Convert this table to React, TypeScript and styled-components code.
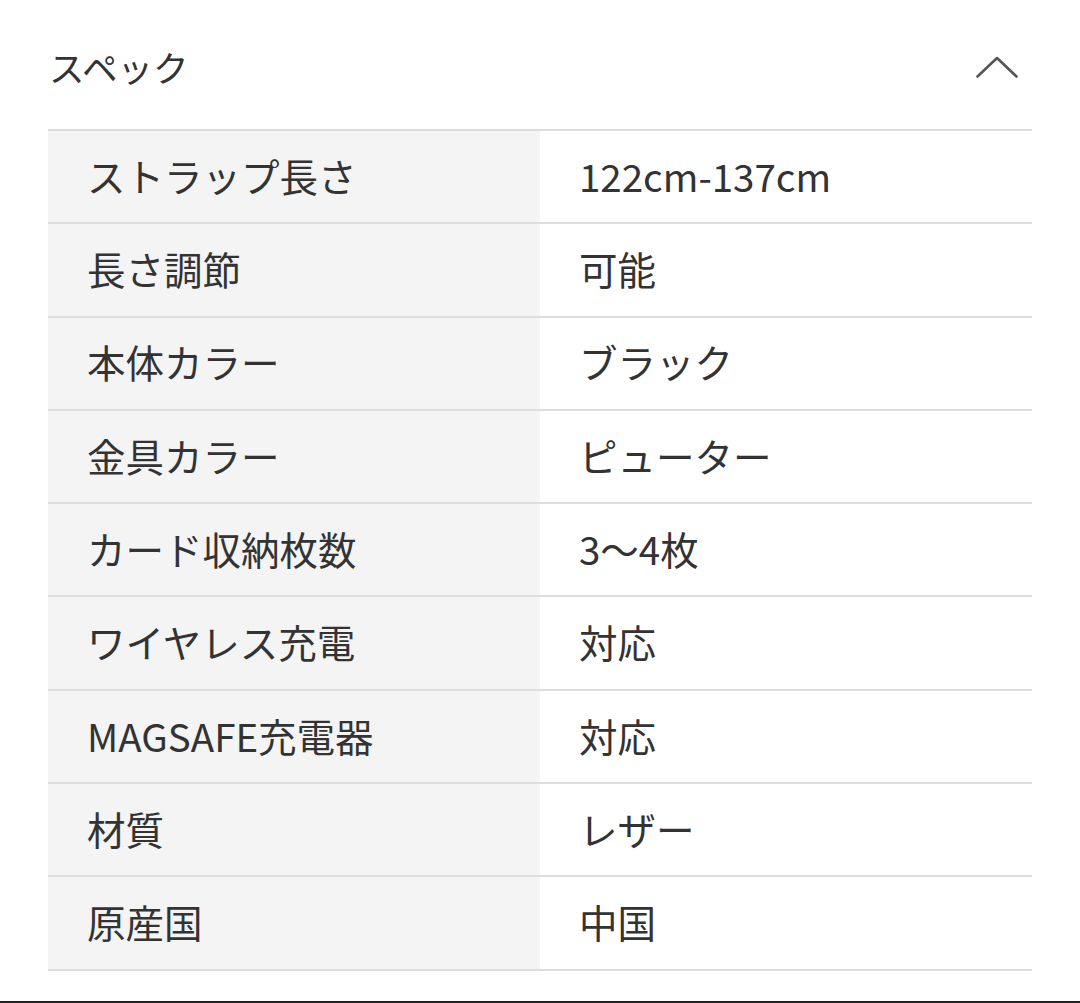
import React from "react";
import styled, { createGlobalStyle } from "styled-components";

const GlobalStyle = createGlobalStyle`
  html, body {
    margin: 0;
    padding: 0;
    background: #ffffff;
  }
  body {
    font-family: "Noto Sans CJK JP", "Noto Sans", sans-serif;
    color: #333333;
  }
`;

const Page = styled.div`
  width: 1080px;
  height: 1003px;
  display: flex;
  flex-direction: column;
  box-sizing: border-box;
  overflow: hidden;
`;

const Section = styled.section`
  padding: 0 48px 0 48px;
  display: flex;
  flex-direction: column;
`;

const Header = styled.div`
  height: 129px;
  padding-top: 4px;
  box-sizing: border-box;
  display: flex;
  align-items: center;
  justify-content: space-between;
`;

const Title = styled.h2`
  margin: 0 0 0 1px;
  font-size: 35.5px;
  font-weight: 400;
  color: #333333;
  letter-spacing: 0;
`;

const Toggle = styled.button`
  border: none;
  background: transparent;
  padding: 0;
  margin-right: 14px;
  width: 42px;
  height: 22px;
  display: flex;
  align-items: center;
  justify-content: center;
  color: #555555;
  cursor: pointer;
`;

const Table = styled.div`
  display: flex;
  flex-direction: column;
  border-bottom: 2px solid #dddddd;
`;

const Row = styled.div`
  display: grid;
  grid-template-columns: 492px 1fr;
  height: 93.3px;
  box-sizing: border-box;
  border-top: 2px solid #dddddd;
`;

const Cell = styled.div<{ $label?: boolean }>`
  display: flex;
  align-items: center;
  padding: 0 0 3px 39px;
  background: ${(p) => (p.$label ? "#f4f4f4" : "#ffffff")};
  font-size: 38.5px;
  line-height: 1;
  color: #333333;
  white-space: nowrap;
`;

const Rule = styled.div`
  margin-top: 30px;
  height: 2px;
  background: #222222;
`;

const specs: [string, string][] = [
  ["ストラップ長さ", "122cm-137cm"],
  ["長さ調節", "可能"],
  ["本体カラー", "ブラック"],
  ["金具カラー", "ピューター"],
  ["カード収納枚数", "3〜4枚"],
  ["ワイヤレス充電", "対応"],
  ["MAGSAFE充電器", "対応"],
  ["材質", "レザー"],
  ["原産国", "中国"],
];

export default function App() {
  return (
    <>
      <GlobalStyle />
      <Page>
        <Section>
          <Header>
            <Title>スペック</Title>
            <Toggle aria-label="閉じる">
              <svg width="42" height="22" viewBox="0 0 42 22" fill="none">
                <polyline
                  points="1.5,20.5 21,2 40.5,20.5"
                  stroke="currentColor"
                  strokeWidth="2.6"
                  strokeLinecap="round"
                  strokeLinejoin="round"
                />
              </svg>
            </Toggle>
          </Header>
          <Table>
            {specs.map(([k, v]) => (
              <Row key={k}>
                <Cell $label>{k}</Cell>
                <Cell>{v}</Cell>
              </Row>
            ))}
          </Table>
        </Section>
        <Rule />
      </Page>
    </>
  );
}
